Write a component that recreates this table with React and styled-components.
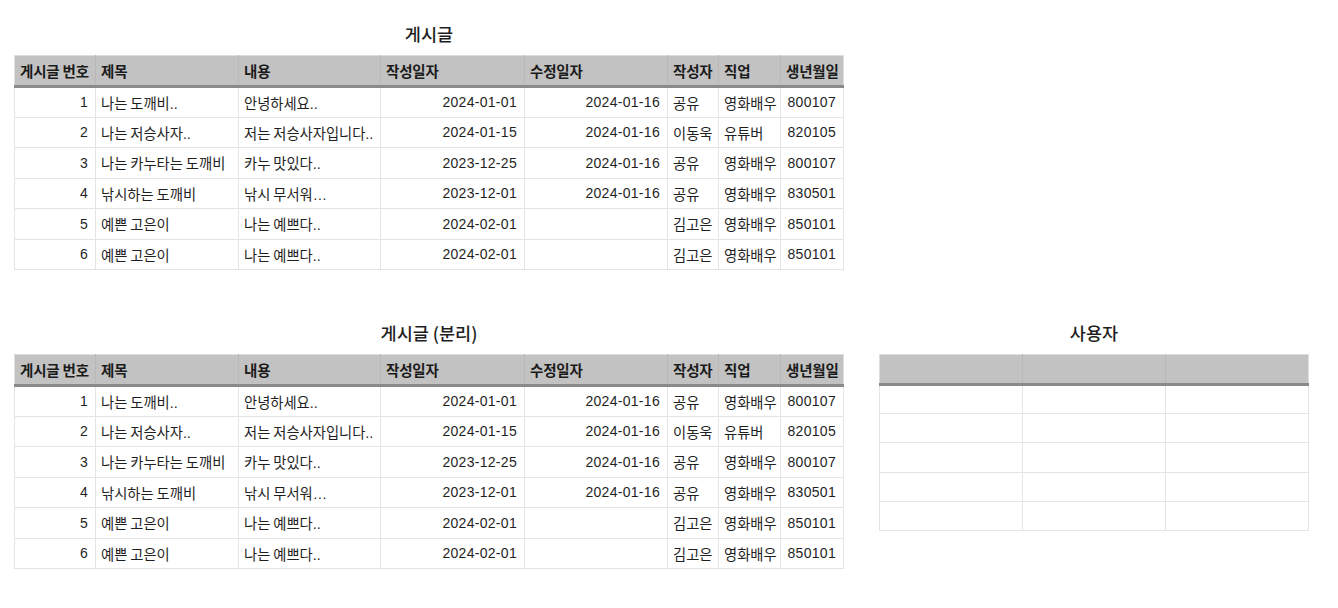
import React from 'react';
import styled, { createGlobalStyle } from 'styled-components';

const GlobalStyle = createGlobalStyle`
  html, body {
    margin: 0;
    padding: 0;
    background: #ffffff;
  }
  body {
    font-family: "Liberation Sans", "Noto Sans CJK KR", sans-serif;
    color: #222;
  }
`;

const Page = styled.div`
  width: 1338px;
  height: 608px;
  box-sizing: border-box;
  padding: 22px 0 0 14px;
  display: flex;
  flex-direction: column;
  gap: 51px;
`;

const Row = styled.div`
  display: flex;
  align-items: flex-start;
  gap: 35px;
`;

const Section = styled.div`
  display: flex;
  flex-direction: column;
  align-items: stretch;
`;

const Title = styled.div`
  font-family: "Noto Sans CJK KR", sans-serif;
  font-size: 17.5px;
  font-weight: 500;
  line-height: 23px;
  text-align: center;
  color: #1e1e1e;
  margin-bottom: 10px;
`;

const Table = styled.table`
  border-collapse: collapse;
  table-layout: fixed;
  width: ${(p) => p.$width}px;
  border: 1px solid #dedede;
`;

const Th = styled.th`
  background: #c2c2c2;
  border-left: 1px solid #b8b8b8;
  border-bottom: 3px solid #8a8a8a;
  height: ${(p) => p.$h}px;
  padding: 0 5px;
  box-sizing: border-box;
  text-align: left;
  font-family: "Noto Sans CJK KR", sans-serif;
  font-size: 14.5px;
  font-weight: 700;
  letter-spacing: -0.2px;
  color: #1a1a1a;
  white-space: nowrap;
  &:first-child {
    border-left: none;
  }
`;

const Td = styled.td`
  border: 1px solid #e4e4e4;
  height: ${(p) => p.$h}px;
  padding: ${(p) => (p.$num ? '0 7px 0 5px' : '0 5px')};
  box-sizing: border-box;
  text-align: ${(p) => (p.$num ? 'right' : 'left')};
  font-family: ${(p) =>
    p.$num ? '"Liberation Sans", sans-serif' : '"Liberation Sans", "Noto Sans CJK KR", sans-serif'};
  font-size: ${(p) => (p.$num ? '14px' : '14.3px')};
  letter-spacing: ${(p) => (p.$num ? '0.3px' : '0')};
  word-spacing: ${(p) => (p.$num ? '0' : '-1px')};
  color: #1f1f1f;
  white-space: nowrap;
  overflow: hidden;
`;

const columns = [
  { label: '게시글 번호', width: 81, num: true },
  { label: '제목', width: 143 },
  { label: '내용', width: 142 },
  { label: '작성일자', width: 144, num: true },
  { label: '수정일자', width: 143, num: true },
  { label: '작성자', width: 51 },
  { label: '직업', width: 62 },
  { label: '생년월일', width: 63, num: true },
];

const posts = [
  ['1', '나는 도깨비..', '안녕하세요..', '2024-01-01', '2024-01-16', '공유', '영화배우', '800107'],
  ['2', '나는 저승사자..', '저는 저승사자입니다..', '2024-01-15', '2024-01-16', '이동욱', '유튜버', '820105'],
  ['3', '나는 카누타는 도깨비', '카누 맛있다..', '2023-12-25', '2024-01-16', '공유', '영화배우', '800107'],
  ['4', '낚시하는 도깨비', '낚시 무서워…', '2023-12-01', '2024-01-16', '공유', '영화배우', '830501'],
  ['5', '예쁜 고은이', '나는 예쁘다..', '2024-02-01', '', '김고은', '영화배우', '850101'],
  ['6', '예쁜 고은이', '나는 예쁘다..', '2024-02-01', '', '김고은', '영화배우', '850101'],
];

const PostTable = ({ title }) => (
  <Section>
    <Title>{title}</Title>
    <Table $width={830}>
      <colgroup>
        {columns.map((c) => (
          <col key={c.label} style={{ width: c.width }} />
        ))}
      </colgroup>
      <thead>
        <tr>
          {columns.map((c) => (
            <Th key={c.label} $h={31}>{c.label}</Th>
          ))}
        </tr>
      </thead>
      <tbody>
        {posts.map((row) => (
          <tr key={row[0]}>
            {row.map((v, i) => (
              <Td key={i} $h={30.5} $num={columns[i].num}>
                {v}
              </Td>
            ))}
          </tr>
        ))}
      </tbody>
    </Table>
  </Section>
);

const UserTable = () => (
  <Section>
    <Title>사용자</Title>
    <Table $width={430}>
      <thead>
        <tr>
          <Th $h={30} />
          <Th $h={30} />
          <Th $h={30} />
        </tr>
      </thead>
      <tbody>
        {[0, 1, 2, 3, 4].map((r) => (
          <tr key={r}>
            <Td $h={29.2} />
            <Td $h={29.2} />
            <Td $h={29.2} />
          </tr>
        ))}
      </tbody>
    </Table>
  </Section>
);

export default function App() {
  return (
    <>
      <GlobalStyle />
      <Page>
        <Row>
          <PostTable title="게시글" />
        </Row>
        <Row>
          <PostTable title="게시글 (분리)" />
          <UserTable />
        </Row>
      </Page>
    </>
  );
}
